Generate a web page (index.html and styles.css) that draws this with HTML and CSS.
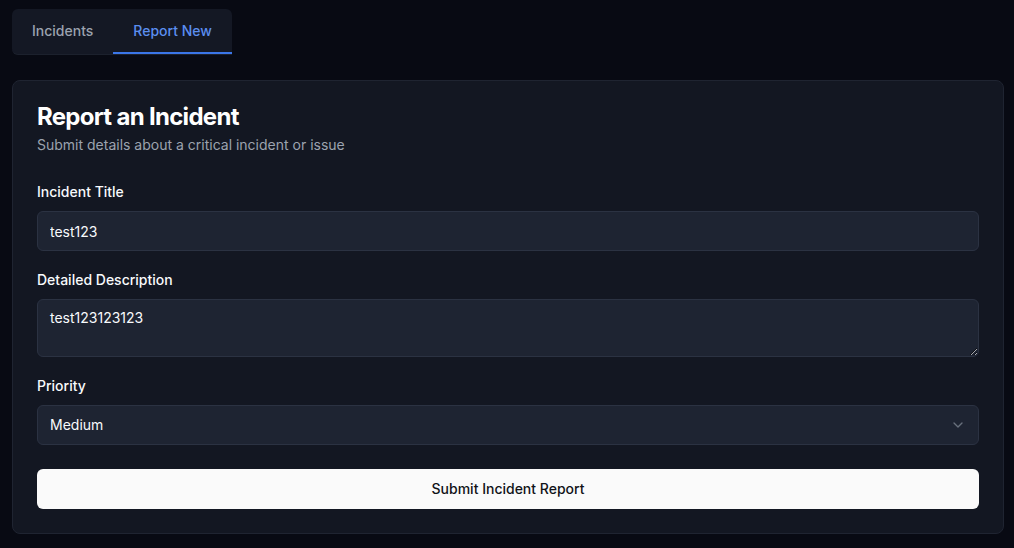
FILE: index.html
```html
<!DOCTYPE html>
<html lang="en">
<head>
<meta charset="utf-8">
<title>Report an Incident</title>
<link rel="stylesheet" href="styles.css">
</head>
<body>
  <nav class="tabs">
    <button class="tab">Incidents</button>
    <button class="tab tab-active">Report New</button>
  </nav>
  <section class="card">
    <header class="card-header">
      <h1 class="card-title">Report an Incident</h1>
      <p class="card-desc">Submit details about a critical incident or issue</p>
    </header>
    <form class="form">
      <div class="field">
        <label class="label" for="title">Incident Title</label>
        <input class="control" id="title" type="text" value="test123">
      </div>
      <div class="field">
        <label class="label" for="desc">Detailed Description</label>
        <textarea class="control textarea" id="desc">test123123123</textarea>
      </div>
      <div class="field">
        <label class="label">Priority</label>
        <div class="control select">
          <span>Medium</span>
          <svg class="chev" width="16" height="16" viewBox="0 0 24 24" fill="none" stroke="currentColor" stroke-width="2" stroke-linecap="round" stroke-linejoin="round"><path d="m6 9 6 6 6-6"/></svg>
        </div>
      </div>
      <button type="button" class="submit">Submit Incident Report</button>
    </form>
  </section>
</body>
</html>
```

FILE: styles.css
```css
* { box-sizing: border-box; }
html, body { margin: 0; }
body {
  background: #080a13;
  font-family: Inter, "Noto Sans", sans-serif;
  color: #f8fafc;
  padding: 9px 10px 0 12px;
  height: 548px;
  overflow: hidden;
}
.tabs {
  display: inline-flex;
  background: #141824;
  border-radius: 6px 6px 0 6px;
  border-bottom: 1px solid #1c212d;
  height: 46px;
  overflow: hidden;
}
.tab {
  font-family: inherit;
  font-size: 14px;
  font-weight: 500;
  background: transparent;
  border: 0;
  color: #9ca3af;
  padding: 0 20px;
  height: 45px;
  line-height: 20px;
  border-bottom: 2px solid transparent;
  padding-top: 0;
}
.tab-active {
  color: #5b8ef0;
  border-bottom-color: #3b76e8;
}
.card {
  margin-top: 25px;
  background: #131722;
  border: 1px solid #1f2431;
  border-radius: 8px;
  padding: 24px 24px 24px;
}
.card-header { margin-bottom: 28px; }
.card-title {
  margin: 0;
  font-size: 24px;
  line-height: 24px;
  font-weight: 700;
  letter-spacing: -0.7px;
  color: #ffffff;
}
.card-desc {
  margin: 6px 0 0;
  font-size: 14px;
  line-height: 20px;
  color: #9ca3af;
}
.form { display: flex; flex-direction: column; gap: 20px; }
.field { display: flex; flex-direction: column; }
.label {
  font-size: 14px;
  line-height: 18px;
  font-weight: 500;
  color: #f8fafc;
  margin-bottom: 10px;
}
.control {
  height: 40px;
  width: 100%;
  background: #1e2432;
  border: 1px solid #2b3242;
  border-radius: 6px;
  color: #f8fafc;
  font-family: inherit;
  font-size: 14px;
  padding: 0 12px;
  outline: none;
}
.textarea {
  height: 58px;
  padding: 8px 12px;
  line-height: 20px;
  resize: vertical;
  display: block;
}
.select {
  display: flex;
  align-items: center;
  justify-content: space-between;
  padding-bottom: 1px;
}
.chev { color: #9ca3af; opacity: 0.6; width: 16px; height: 16px; }
.submit {
  margin-top: 4px;
  height: 40px;
  width: 100%;
  background: #fafafa;
  color: #111318;
  border: 0;
  border-radius: 6px;
  font-family: inherit;
  font-size: 14px;
  font-weight: 500;
  padding: 0 0 1px;
}
```
